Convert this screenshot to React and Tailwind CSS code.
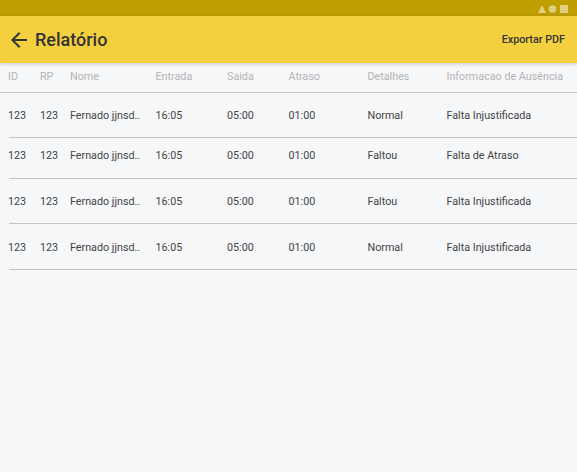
import React from 'react';

const columns = 'grid grid-cols-[32px_30px_85.5px_71.5px_61.5px_79px_79px_1fr] items-center';

const headers = ['ID', 'RP', 'Nome', 'Entrada', 'Saida', 'Atraso', 'Detalhes', 'Informacao de Ausência'];

const rows = [
    { height: 'h-[45px]', pad: 'pt-[3px]', details: 'Normal', info: 'Falta Injustificada' },
    { height: 'h-[41px]', pad: 'pb-[3px]', details: 'Faltou', info: 'Falta de Atraso' },
    { height: 'h-[45px]', pad: 'pt-[2px]', details: 'Faltou', info: 'Falta Injustificada' },
    { height: 'h-[46px]', pad: 'pt-[3px]', details: 'Normal', info: 'Falta Injustificada' },
];

const StatusIcons = () => (
    <svg width="30" height="8" viewBox="0 0 30 8" fill="#e0cf80" className="mt-px">
        <polygon points="0,8 4,0 8,8" />
        <circle cx="14.5" cy="4" r="3.7" />
        <rect x="22" y="0" width="8" height="8" />
    </svg>
);

const BackArrow = () => (
    <svg width="24" height="24" viewBox="0 0 24 24" fill="#333333">
        <path d="M20 11H7.83l5.59-5.59L12 4l-8 8 8 8 1.41-1.41L7.83 13H20v-2z" />
    </svg>
);

const App = () => {
    return (
        <div className="w-[577px] h-[472px] overflow-hidden bg-[#f6f7f9] font-['Roboto',sans-serif]">
            <div className="h-4 bg-[#bf9f00] flex items-center justify-end pr-[9px]">
                <StatusIcons />
            </div>
            <header className="relative h-[47px] bg-[#f4d03f] flex items-center justify-between pl-[7px] pr-3 shadow-[0_1px_4px_rgba(0,0,0,0.2)]">
                <div className="flex items-center gap-1">
                    <BackArrow />
                    <h1 className="text-lg font-medium text-[#333333]">Relatório</h1>
                </div>
                <button className="pt-[2px] text-[10.75px] font-medium text-[#333333]">Exportar PDF</button>
            </header>
            <div className={`${columns} h-[30px] pl-2 border-b border-[#c4c4c4] text-[10.75px] text-[#b4b4b4]`}>
                {headers.map((h) => (
                    <span key={h} className="whitespace-nowrap">{h}</span>
                ))}
            </div>
            <div>
                {rows.map((row, i) => (
                    <div key={i} className={`${columns} ${row.height} ${row.pad} ml-[9px] -indent-px border-b border-[#c4c4c4] text-[10.75px] text-[#444444]`}>
                        <span>123</span>
                        <span>123</span>
                        <span>Fernado jjnsd..</span>
                        <span>16:05</span>
                        <span>05:00</span>
                        <span>01:00</span>
                        <span>{row.details}</span>
                        <span>{row.info}</span>
                    </div>
                ))}
            </div>
        </div>
    );
};

export default App;
